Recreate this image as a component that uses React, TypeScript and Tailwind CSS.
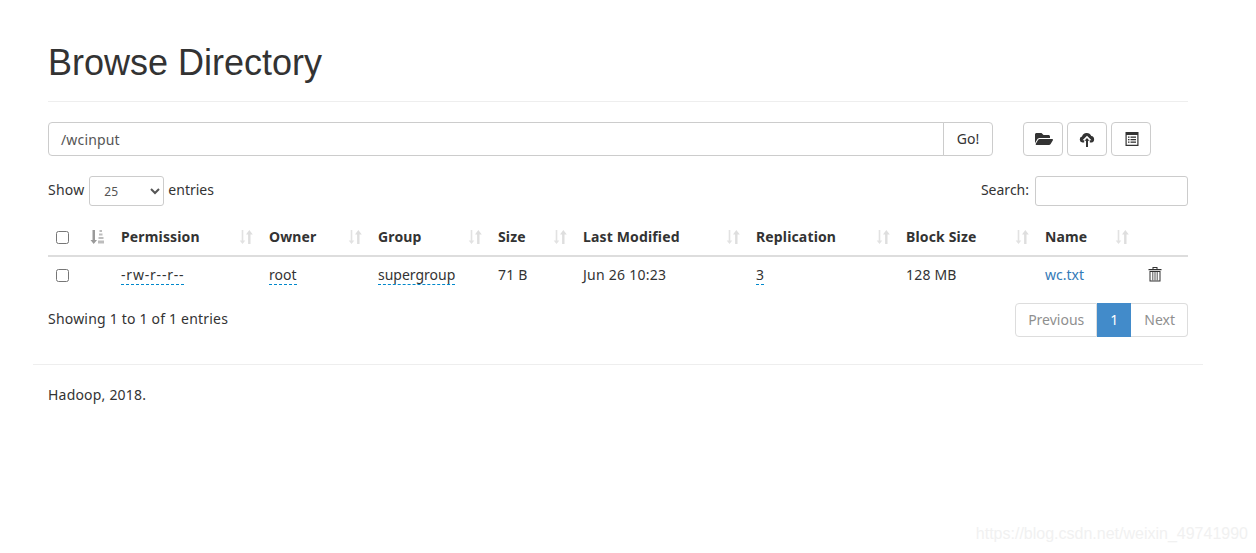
import React from "react";
import { FaFolderOpen } from "react-icons/fa";

const SortIcon = ({ active = false }: { active?: boolean }) => (
  <svg width="14" height="16" viewBox="0 0 14 16" className="shrink-0">
    {active ? (
      <>
        <path d="M2.500 1h2.500v10h2L3.700 15 .5 11h2z" fill="#9a9a9a" />
        <g fill="#bdbdbd">
          <rect x="9.500" y="1" width="2.500" height="2" />
          <rect x="9" y="4.500" width="3.500" height="2" />
          <rect x="8.500" y="8" width="5" height="2" />
          <rect x="8" y="11.500" width="6" height="3" />
        </g>
      </>
    ) : (
      <>
        <path d="M2.700 1h1.600v10.500h2L3.500 15 .7 11.500h2z" fill="#e2e2e2" />
        <path d="M11.500 15h-2.400V5.500H7L10.300 1l3.500 4.500h-2.300z" fill="#dedede" />
      </>
    )}
  </svg>
);

const Dotted = ({ children }: { children: React.ReactNode }) => (
  <span className="border-b border-dashed border-[#0088cc]">{children}</span>
);

const Check = () => (
  <input type="checkbox" className="block h-[13px] w-[13px] appearance-none rounded-[2.5px] border border-[#767676] bg-white" />
);

const Th = ({ label, w }: { label: string; w: number }) => (
  <th style={{ width: w }} className="border-b-2 border-[#ddd] px-2 pt-[9px] pb-[8px] text-left font-bold tracking-[0.15px]">
    <div className="flex items-center justify-between">
      <span>{label}</span>
      <SortIcon />
    </div>
  </th>
);

const IconBtn = ({ children }: { children: React.ReactNode }) => (
  <button className="flex h-[34px] w-10 items-center justify-center rounded border border-[#ccc] bg-white text-[#333]">
    {children}
  </button>
);

export default function App() {
  return (
    <div className="relative h-[553px] overflow-hidden bg-white font-['Noto_Sans','Open_Sans',sans-serif] text-sm leading-5 text-[#333]">
      <div className="ml-[33px] w-[1170px] px-[15px]">
        <h1 className="mt-[24px] border-b border-[#eee] pt-[19px] pb-[18px] font-['Liberation_Sans','Noto_Sans',sans-serif] text-[36px] leading-[40px] font-normal text-[#333]">
          Browse Directory
        </h1>
        <div className="mt-5 flex items-center">
          <div className="flex w-[945px]">
            <div className="flex h-[34px] flex-1 items-center rounded-l border border-[#ccc] px-3 pt-[2px] tracking-[0.15px] text-[#555]">/wcinput</div>
            <div className="-ml-px flex h-[34px] w-[50px] items-center justify-center rounded-r border border-[#ccc]">Go!</div>
          </div>
          <div className="ml-[30px] flex gap-1">
            <IconBtn><FaFolderOpen size={18} className="translate-x-[1px]" /></IconBtn>
            <IconBtn>
              <svg width="16" height="15" viewBox="0 0 16 15">
                <path d="M3.500 10.500A3 3 0 0 1 3 4.600 5 5 0 0 1 12.300 4 3.300 3.300 0 0 1 12.500 10.500H10.800V8.300H12.500L8 3.800 3.500 8.300H5.200V10.500z" fill="#333" />
                <path d="M8 6l2.500 2.700H9V15H7V8.700H5.500z" fill="#333" />
              </svg>
            </IconBtn>
            <IconBtn>
              <svg width="14" height="14" viewBox="0 0 14 14" className="translate-x-[1px]">
                <path fillRule="evenodd" d="M.500 0h13v14H.500zM1.700 3v9.800h10.600V3z" fill="#333" />
                <g fill="#333">
                  <rect x="3" y="4.500" width="1.500" height="1.300" /><rect x="5.500" y="4.500" width="5.500" height="1.300" />
                  <rect x="3" y="7" width="1.500" height="1.300" /><rect x="5.500" y="7" width="5.500" height="1.300" />
                  <rect x="3" y="9.500" width="1.500" height="1.300" /><rect x="5.500" y="9.500" width="5.500" height="1.300" />
                </g>
              </svg>
            </IconBtn>
          </div>
        </div>

        <div className="mt-5 flex items-center justify-between">
          <div className="flex items-center">
            <span className="mb-[2px] mr-[5px] tracking-[0.2px]">Show</span>
            <select className="h-[30px] w-[75px] rounded-[3px] border border-[#ccc] bg-white pl-2.5 text-xs text-[#555]">
              <option>25</option>
            </select>
            <span className="mb-[2px] ml-1">entries</span>
          </div>
          <div className="flex items-center gap-1.5">
            <span className="mb-[2px]">Search:</span>
            <div className="h-[30px] w-[153px] rounded-[3px] border border-[#ccc]" />
          </div>
        </div>

        <table className="mt-3 w-[1140px] table-fixed border-collapse">
          <thead>
            <tr>
              <th style={{ width: 37 }} className="border-b-2 border-[#ddd] px-2 pt-[9px] pb-[8px]"><Check /></th>
              <th style={{ width: 28 }} className="border-b-2 border-[#ddd] pt-[9px] pb-[8px] text-left"><div className="pl-[5px]"><SortIcon active /></div></th>
              <Th label="Permission" w={148} />
              <Th label="Owner" w={109} />
              <Th label="Group" w={120} />
              <Th label="Size" w={85} />
              <Th label="Last Modified" w={173} />
              <Th label="Replication" w={150} />
              <Th label="Block Size" w={139} />
              <Th label="Name" w={100} />
              <th style={{ width: 51 }} className="border-b-2 border-[#ddd]" />
            </tr>
          </thead>
          <tbody>
            <tr>
              <td className="px-2 py-2"><Check /></td>
              <td />
              <td className="p-2"><Dotted><span className="tracking-[0.8px]">-rw-r--r--</span></Dotted></td>
              <td className="p-2"><Dotted>root</Dotted></td>
              <td className="p-2"><Dotted>supergroup</Dotted></td>
              <td className="p-2 tracking-[0.2px]">71 B</td>
              <td className="p-2 tracking-[0.25px]">Jun 26 10:23</td>
              <td className="p-2"><Dotted>3</Dotted></td>
              <td className="p-2 tracking-[0.2px]">128 MB</td>
              <td className="p-2 text-[#337ab7]">wc.txt</td>
              <td className="p-2">
                <svg width="14" height="16" viewBox="0 0 14 16" className="ml-[3px] -translate-y-[1px]">
                  <path d="M.500 3h13v1.200H.500zM4.500 3V1h5v2H8.500V2h-3v1z" fill="#333" />
                  <path fillRule="evenodd" d="M1.500 5h11v10.500h-11zM2.500 6v8.500h9V6z" fill="#333" />
                  <path d="M4.300 6h1v8.500h-1zM6.500 6h1v8.500h-1zM8.700 6h1v8.500h-1z" fill="#555" />
                </svg>
              </td>
            </tr>
          </tbody>
        </table>

        <div className="mt-[10px] flex items-start justify-between">
          <div className="pt-[6px] tracking-[0.2px]">Showing 1 to 1 of 1 entries</div>
          <div className="flex h-[34px]">
            <div className="flex items-center rounded-l border border-[#ddd] px-3 text-[#8f8f8f]">Previous</div>
            <div className="flex w-[34px] items-center justify-center border border-[#428bca] bg-[#428bca] text-white">1</div>
            <div className="flex items-center rounded-r border border-l-0 border-[#ddd] pl-[13px] pr-3 text-[#8f8f8f]">Next</div>
          </div>
        </div>
      </div>
      <div className="ml-[33px] mt-[27px] w-[1170px] border-t border-[#eee] px-[15px] pt-5 tracking-[0.2px]">Hadoop, 2018.</div>
      <div className="absolute bottom-[9px] right-[8px] font-['Liberation_Sans',sans-serif] text-[16px] text-[#f1f1f1]">https://blog.csdn.net/weixin_49741990</div>
    </div>
  );
}
